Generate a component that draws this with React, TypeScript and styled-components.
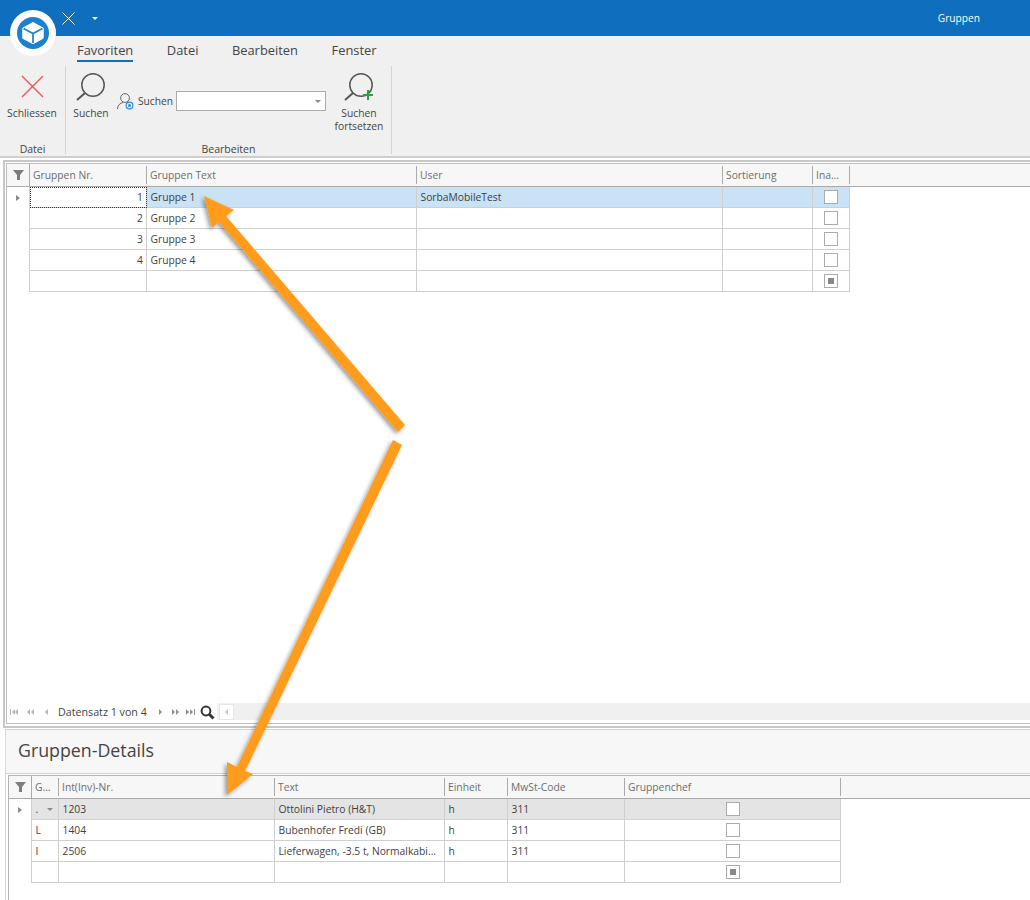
import React from "react";
import styled, { createGlobalStyle } from "styled-components";

const GlobalStyle = createGlobalStyle`
  html, body {
    margin: 0;
    padding: 0;
    background: #fff;
  }
  body {
    font-family: "Open Sans", "Liberation Sans", sans-serif;
    color: #3d3d3d;
  }
`;

const Page = styled.div`
  position: relative;
  width: 1030px;
  height: 900px;
  overflow: hidden;
  background: #fff;
`;

const TitleBar = styled.div`
  height: 36px;
  background: #106ebe;
  display: flex;
  align-items: center;
  padding-left: 62px;
  color: #fff;
`;

const QuickCaret = styled.span`
  width: 0;
  height: 0;
  margin-left: 17px;
  border-left: 3px solid transparent;
  border-right: 3px solid transparent;
  border-top: 3px solid #fff;
`;

const TitleText = styled.span`
  margin-left: auto;
  margin-right: 50px;
  font-size: 10.2px;
`;

const LogoWrap = styled.div`
  position: absolute;
  left: 10px;
  top: 10px;
  width: 46px;
  height: 46px;
`;

const RibbonArea = styled.div`
  height: 122px;
  background: #f0f0f0;
  border-bottom: 2px solid #cfcfcf;
  box-sizing: border-box;
`;

const TabRow = styled.div`
  height: 30px;
  display: flex;
  padding-left: 77px;
  gap: 33.5px;
`;

const Tab = styled.div<{ $active?: boolean }>`
  height: 24px;
  line-height: 28px;
  font-size: 12.9px;
  color: #444;
  border-bottom: 2px solid ${(p) => (p.$active ? "#106ebe" : "transparent")};
`;

const Ribbon = styled.div`
  display: flex;
  height: 88px;
`;

const Group = styled.div<{ $width: number }>`
  width: ${(p) => p.$width}px;
  display: flex;
  flex-direction: column;
  align-items: center;
  border-right: 1px solid #d4d4d4;
  box-sizing: border-box;
`;

const GroupBody = styled.div`
  flex: 1;
  width: 100%;
  display: flex;
  align-items: flex-start;
`;

const GroupLabel = styled.div`
  height: 12px;
  font-size: 10.5px;
  line-height: 15px;
  color: #444;
`;

const BigButton = styled.div<{ $width: number }>`
  width: ${(p) => p.$width}px;
  flex: none;
  display: flex;
  flex-direction: column;
  align-items: center;
  padding-top: 4px;
  font-size: 10.3px;
  line-height: 13px;
  text-align: center;
  color: #444;
  svg {
    margin-bottom: 5px;
    display: block;
  }
`;

const SearchField = styled.div`
  display: flex;
  align-items: center;
  margin-top: 25px;
  gap: 2px;
  font-size: 10.2px;
  color: #444;
  svg {
    margin-right: 2px;
  }
`;

const SearchBox = styled.div`
  width: 148px;
  height: 18px;
  margin-left: 1px;
  background: #fff;
  border: 1px solid #ababab;
  display: flex;
  align-items: center;
  justify-content: flex-end;
`;

const BoxCaret = styled.span`
  width: 0;
  height: 0;
  margin-right: 4px;
  border-left: 3px solid transparent;
  border-right: 3px solid transparent;
  border-top: 3px solid #8a8a8a;
`;

const MasterPanel = styled.div`
  height: 568px;
  margin: 2px 0 0 3px;
  border: 2px solid #c8c8c8;
  border-right: none;
  box-sizing: border-box;
  padding: 1px 0 2px 1px;
  display: flex;
`;

const MasterGrid = styled.div`
  flex: 1;
  min-width: 0;
  border: 1px solid #c0c0c0;
  border-right: none;
  display: flex;
  flex-direction: column;
`;

const DetailPanel = styled.div`
  margin: 1px 0 0 5px;
  border-top: 1px solid #d4d4d4;
  border-left: 1px solid #d8d8d8;
  background: #fff;
`;

const DetailTitle = styled.div`
  height: 44px;
  padding-left: 12px;
  font-size: 17.8px;
  line-height: 41px;
  color: #444;
  background: #f7f7f7;
  box-sizing: border-box;
  border-bottom: 1px solid #d0d0d0;
`;

const DetailGrid = styled.div`
  margin: 1px 0 0 2px;
  border-left: 1px solid #b4b4b4;
  height: 130px;
  display: flex;
  flex-direction: column;
`;

const Header = styled.div<{ $height: number; $topLine?: boolean }>`
  height: ${(p) => p.$height}px;
  flex: none;
  background: #f7f7f7;
  border-top: ${(p) => (p.$topLine ? "1px solid #b4b4b4" : "none")};
  border-bottom: 1px solid #aaa;
  display: flex;
`;

const FilterCell = styled.div`
  width: 22px;
  flex: none;
  display: flex;
  align-items: center;
  justify-content: center;
  border-right: 1px solid #aaa;
`;

const HeadCell = styled.div<{ $width: number }>`
  width: ${(p) => p.$width}px;
  flex: none;
  box-sizing: border-box;
  display: flex;
  align-items: center;
  padding-left: 3px;
  font-size: 10.3px;
  color: #6d6d6d;
  white-space: nowrap;
  position: relative;
  &::after {
    content: "";
    position: absolute;
    right: 0;
    top: 2px;
    bottom: 2px;
    width: 1px;
    background: #aaa;
  }
`;

const Row = styled.div`
  display: flex;
  height: 21px;
  flex: none;
`;

const Indicator = styled.div`
  width: 22px;
  flex: none;
  display: flex;
  align-items: center;
  justify-content: center;
  border-right: 1px solid #cfcfcf;
`;

const IndicatorArrow = styled.span`
  width: 0;
  height: 0;
  border-top: 3.5px solid transparent;
  border-bottom: 3.5px solid transparent;
  border-left: 4px solid #8a8a8a;
`;

const Cell = styled.div<{ $width: number; $bg?: string; $right?: boolean; $center?: boolean; $focus?: boolean }>`
  width: ${(p) => p.$width}px;
  flex: none;
  box-sizing: border-box;
  height: 21px;
  padding: ${(p) => (p.$center ? "0" : "0 3px 0 3.5px")};
  background: ${(p) => p.$bg ?? "#fff"};
  border-right: 1px solid #cfcfcf;
  border-bottom: 1px solid #cfcfcf;
  display: flex;
  align-items: center;
  justify-content: ${(p) => (p.$center ? "center" : p.$right ? "flex-end" : "space-between")};
  font-size: 10.3px;
  color: #3f3f3f;
  white-space: nowrap;
  overflow: hidden;
  outline: ${(p) => (p.$focus ? "1px dotted #333" : "none")};
  outline-offset: -1px;
`;

const CellCaret = styled.span`
  width: 0;
  height: 0;
  margin-right: 2px;
  border-left: 3px solid transparent;
  border-right: 3px solid transparent;
  border-top: 3px solid #8a8a8a;
`;

const Check = styled.span<{ $mixed?: boolean }>`
  width: 14px;
  height: 14px;
  box-sizing: border-box;
  background: #fff;
  border: 1px solid #ababab;
  display: flex;
  align-items: center;
  justify-content: center;
  &::after {
    content: "";
    width: 6px;
    height: 6px;
    background: ${(p) => (p.$mixed ? "#888" : "transparent")};
  }
`;

const Spacer = styled.div`
  flex: 1;
`;

const Pager = styled.div`
  height: 20px;
  padding: 0 0 1px 3px;
  flex: none;
  display: flex;
  align-items: center;
  font-size: 10.7px;
  color: #444;
`;

const PagerGlyphs = styled.svg`
  display: block;
  flex: none;
`;

const PagerText = styled.span`
  margin: 0 12px 0 9px;
`;

const Magnifier = styled.svg`
  display: block;
  flex: none;
  margin-left: 1px;
`;

const PagerScroll = styled.div`
  margin: 0 0 1px 1px;
  flex: 1;
  height: 17px;
  background: #f0f0f0;
  display: flex;
  align-items: center;
  padding-left: 2px;
`;

const PagerThumb = styled.div`
  width: 13px;
  height: 14px;
  background: #fff;
  border: 1px solid #e6e6e6;
  display: flex;
  align-items: center;
  justify-content: center;
`;

const PagerLeft = styled.span`
  width: 0;
  height: 0;
  border-top: 3px solid transparent;
  border-bottom: 3px solid transparent;
  border-right: 3px solid #c4c4c4;
`;

const ArrowLayer = styled.svg`
  position: absolute;
  left: 0;
  top: 0;
  pointer-events: none;
`;

const FilterIcon = () => (
  <svg width="11" height="10" viewBox="0 0 11 10">
    <path d="M0 0h11L7 5v5H4V5z" fill="#7d7d7d" />
  </svg>
);

const Logo = () => (
  <svg width="46" height="46" viewBox="0 0 46 46">
    <circle cx="23" cy="23" r="23" fill="#fff" />
    <circle cx="23" cy="23" r="16" fill="#1b81d0" />
    <path d="M23 12.5l10.2 5.6v10.2L23 33.8l-10.2-5.5V18.1z" fill="#fff" stroke="#fff" strokeLinejoin="round" />
    <path d="M13.5 18.5L23 23.5l9.5-5M23 23.5V33" fill="none" stroke="#1b81d0" strokeWidth="1.7" />
  </svg>
);

const SearchIcon = ({ plus }: { plus?: boolean }) => (
  <svg width="32" height="32" viewBox="0 0 32 32">
    <circle cx="18" cy="15" r="11.2" fill="none" stroke="#555" strokeWidth="1.5" />
    <path d="M10 23L2 30" stroke="#555" strokeWidth="2" />
    {plus && <path d="M25 20v10M20 25h10" stroke="#2ea043" strokeWidth="2" />}
  </svg>
);

const UserSearchIcon = () => (
  <svg width="18" height="18" viewBox="0 0 18 18">
    <circle cx="9" cy="6" r="4.4" fill="none" stroke="#666" strokeWidth="1" />
    <path d="M1.5 17c0-3.5 2.5-6 5.5-6.5M11.5 10.4l1 .5" fill="none" stroke="#666" strokeWidth="1" />
    <circle cx="13.5" cy="13.5" r="3.4" fill="none" stroke="#2f8fdc" strokeWidth="1.2" />
    <circle cx="13.5" cy="13.5" r="1.6" fill="#2f8fdc" />
  </svg>
);

const tri = (x: number, left: boolean) =>
  left ? `M${x + 3} 0v6L${x} 3z` : `M${x} 0v6L${x + 3} 3z`;

const backShapes = ["M0 0h1v6H0z", tri(2, true), tri(5, true), tri(17, true), tri(21, true), tri(35, true)];
const nextShapes = [tri(0, false), tri(13, false), tri(17, false), tri(27, false), tri(31, false), "M35 0h1v6h-1z"];

const PagerButtons = ({ shapes, color }: { shapes: string[]; color: string }) => (
  <PagerGlyphs width="39" height="6" viewBox="0 0 39 6">
    {shapes.map((d) => (
      <path key={d} d={d} fill={color} />
    ))}
  </PagerGlyphs>
);

const masterCols = [117, 270, 306, 90, 37];
const masterHead = ["Gruppen Nr.", "Gruppen Text", "User", "Sortierung", "Ina..."];
const masterRows = [
  ["1", "Gruppe 1", "SorbaMobileTest"],
  ["2", "Gruppe 2", ""],
  ["3", "Gruppe 3", ""],
  ["4", "Gruppe 4", ""],
  ["", "", ""],
];

const detailCols = [27, 216, 170, 63, 117, 216];
const detailHead = ["G...", "Int(Inv)-Nr.", "Text", "Einheit", "MwSt-Code", "Gruppenchef"];
const detailRows = [
  [".", "1203", "Ottolini Pietro (H&T)", "h", "311"],
  ["L", "1404", "Bubenhofer Fredi (GB)", "h", "311"],
  ["I", "2506", "Lieferwagen, -3.5 t, Normalkabi...", "h", "311"],
  ["", "", "", "", ""],
];

export default function App() {
  return (
    <Page>
      <GlobalStyle />
      <TitleBar>
        <svg width="13" height="13" viewBox="0 0 13 13">
          <path d="M.5.5l12 12M12.5.5l-12 12" stroke="#fff" strokeWidth="1" />
        </svg>
        <QuickCaret />
        <TitleText>Gruppen</TitleText>
      </TitleBar>
      <RibbonArea>
        <TabRow>
          <Tab $active>Favoriten</Tab>
          <Tab>Datei</Tab>
          <Tab>Bearbeiten</Tab>
          <Tab>Fenster</Tab>
        </TabRow>
        <Ribbon>
          <Group $width={66}>
            <GroupBody>
              <BigButton $width={64}>
                <svg width="32" height="32" viewBox="0 0 32 32">
                  <path d="M6 6l21 21M27 6L6 27" stroke="#f0545a" strokeWidth="1.4" />
                </svg>
                Schliessen
              </BigButton>
            </GroupBody>
            <GroupLabel>Datei</GroupLabel>
          </Group>
          <Group $width={326}>
            <GroupBody>
              <BigButton $width={50}>
                <SearchIcon />
                Suchen
              </BigButton>
              <SearchField>
                <UserSearchIcon />
                Suchen
                <SearchBox>
                  <BoxCaret />
                </SearchBox>
              </SearchField>
              <BigButton $width={66}>
                <SearchIcon plus />
                Suchen
                <br />
                fortsetzen
              </BigButton>
            </GroupBody>
            <GroupLabel>Bearbeiten</GroupLabel>
          </Group>
        </Ribbon>
      </RibbonArea>
      <MasterPanel>
        <MasterGrid>
          <Header $height={22}>
            <FilterCell>
              <FilterIcon />
            </FilterCell>
            {masterHead.map((h, i) => (
              <HeadCell key={h} $width={masterCols[i]}>
                {h}
              </HeadCell>
            ))}
          </Header>
          {masterRows.map((r, i) => (
            <Row key={i}>
              <Indicator>{i === 0 && <IndicatorArrow />}</Indicator>
              <Cell $width={masterCols[0]} $right $focus={i === 0}>
                {r[0]}
              </Cell>
              <Cell $width={masterCols[1]} $bg={i === 0 ? "#c9e2f6" : undefined}>
                {r[1]}
              </Cell>
              <Cell $width={masterCols[2]} $bg={i === 0 ? "#c9e2f6" : undefined}>
                {r[2]}
              </Cell>
              <Cell $width={masterCols[3]} $bg={i === 0 ? "#c9e2f6" : undefined} />
              <Cell $width={masterCols[4]} $center $bg={i === 0 ? "#c9e2f6" : undefined}>
                <Check $mixed={i === 4} />
              </Cell>
            </Row>
          ))}
          <Spacer />
          <Pager>
            <PagerButtons shapes={backShapes} color="#b5b5b5" />
            <PagerText>Datensatz 1 von 4</PagerText>
            <PagerButtons shapes={nextShapes} color="#8e8e8e" />
            <Magnifier width="17" height="15" viewBox="0 0 17 15">
              <circle cx="7" cy="6" r="4.4" fill="none" stroke="#333" strokeWidth="2" />
              <path d="M10.5 9.5l4 4" stroke="#333" strokeWidth="3" />
            </Magnifier>
            <PagerScroll>
              <PagerThumb>
                <PagerLeft />
              </PagerThumb>
            </PagerScroll>
          </Pager>
        </MasterGrid>
      </MasterPanel>
      <DetailPanel>
        <DetailTitle>Gruppen-Details</DetailTitle>
        <DetailGrid>
          <Header $height={22} $topLine>
            <FilterCell>
              <FilterIcon />
            </FilterCell>
            {detailHead.map((h, i) => (
              <HeadCell key={h} $width={detailCols[i]}>
                {h}
              </HeadCell>
            ))}
          </Header>
          {detailRows.map((r, i) => (
            <Row key={i}>
              <Indicator>{i === 0 && <IndicatorArrow />}</Indicator>
              {r.map((t, j) => (
                <Cell key={j} $width={detailCols[j]} $bg={i === 0 ? "#e4e4e4" : undefined}>
                  {t}
                  {i === 0 && j === 0 && <CellCaret />}
                </Cell>
              ))}
              <Cell $width={detailCols[5]} $center $bg={i === 0 ? "#e4e4e4" : undefined}>
                <Check $mixed={i === 3} />
              </Cell>
            </Row>
          ))}
        </DetailGrid>
      </DetailPanel>
      <ArrowLayer width="1030" height="900" viewBox="0 0 1030 900">
        <defs>
          <filter id="arrowShadow" x="-20%" y="-20%" width="140%" height="140%">
            <feDropShadow dx="-2" dy="2" stdDeviation="2" floodColor="#000" floodOpacity="0.4" />
          </filter>
        </defs>
        <g filter="url(#arrowShadow)" fill="#ff9c1a">
          <path d="M204 196L234 210L226 216L405 425L398 432L219 222L212 228z" />
          <path d="M393 440L402 445L245 771L253 774L227 795L227 762L237 767z" />
        </g>
      </ArrowLayer>
      <LogoWrap>
        <Logo />
      </LogoWrap>
    </Page>
  );
}
